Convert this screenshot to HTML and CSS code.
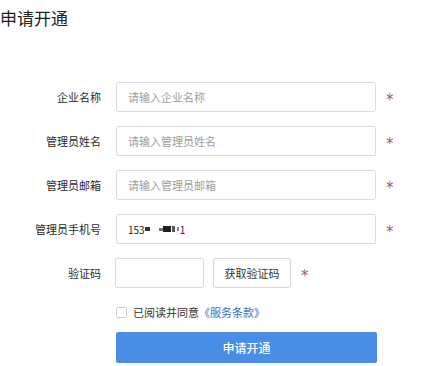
FILE: index.html
```html
<!DOCTYPE html>
<html lang="zh">
<head>
<meta charset="utf-8">
<link rel="stylesheet" href="styles.css">
</head>
<body>
<h1 class="title">申请开通</h1>
<form class="form">
  <div class="row">
    <label class="label">企业名称</label>
    <div class="input placeholder">请输入企业名称</div>
    <span class="star">*</span>
  </div>
  <div class="row">
    <label class="label">管理员姓名</label>
    <div class="input placeholder">请输入管理员姓名</div>
    <span class="star">*</span>
  </div>
  <div class="row">
    <label class="label">管理员邮箱</label>
    <div class="input placeholder">请输入管理员邮箱</div>
    <span class="star">*</span>
  </div>
  <div class="row">
    <label class="label">管理员手机号</label>
    <div class="input value">153<span class="blk b1"></span><span class="gap"></span><span class="blk b2"></span><span class="blk b3"></span><span class="blk b4"></span><span class="blk b5"></span>1</div>
    <span class="star">*</span>
  </div>
  <div class="row">
    <label class="label">验证码</label>
    <div class="input code"></div>
    <button type="button" class="getcode">获取验证码</button>
    <span class="star star-code">*</span>
  </div>
  <div class="agree">
    <span class="checkbox"></span>
    <span class="agree-text">已阅读并同意<span class="link">《服务条款》</span></span>
  </div>
  <button type="button" class="submit">申请开通</button>
</form>
</body>
</html>
```
FILE: styles.css
```css
html, body {
  margin: 0;
  padding: 0;
  background: #fff;
}
body {
  font-family: "Noto Sans CJK SC", "Noto Sans", sans-serif;
  color: #333;
  width: 421px;
  height: 366px;
  overflow: hidden;
}
.title {
  margin: 7px 0 0 0;
  font-size: 17px;
  line-height: 22px;
  font-weight: 400;
  color: #222;
}
.form {
  margin-top: 53px;
  display: flex;
  flex-direction: column;
}
.row {
  display: flex;
  align-items: center;
  height: 30px;
  margin-bottom: 14px;
}
.label {
  width: 101px;
  text-align: right;
  font-size: 11px;
  color: #2a2a2a;
  margin-right: 15px;
  flex: none;
}
.input {
  box-sizing: border-box;
  width: 260px;
  height: 30px;
  border: 1px solid #dcdcdc;
  border-radius: 2px;
  font-size: 11px;
  padding-left: 11px;
  display: flex;
  align-items: center;
  flex: none;
}
.placeholder {
  color: #9e9e9e;
}
.value {
  color: #222;
  font-size: 10px;
}
.blk {
  display: inline-block;
  background: #333;
  height: 5px;
}
.b1 { width: 5px; height: 4px; }
.gap { display: inline-block; width: 9px; }
.b2 { width: 4px; height: 3px; background: #777; }
.b3 { width: 8px; height: 6px; background: #222; }
.b4 { width: 3px; height: 6px; background: #555; margin-left: 1px; }
.b5 { width: 2px; height: 4px; background: #888; margin: 0 1px 0 2px; }
.star {
  margin-left: 10px;
  color: #a0606a;
  font-family: "DejaVu Sans", sans-serif;
  font-size: 15px;
  line-height: 15px;
  padding-top: 6px;
}
.code {
  width: 89px;
  margin-left: -1px;
}
.getcode {
  box-sizing: border-box;
  margin-left: 9px;
  width: 78px;
  height: 30px;
  border: 1px solid #d6d6d6;
  border-radius: 3px;
  background: #fff;
  font-family: inherit;
  font-size: 11px;
  color: #333;
  padding: 0;
}
.star-code {
  margin-left: 10px;
}
.agree {
  display: flex;
  align-items: center;
  margin-left: 116px;
  margin-top: 3px;
  height: 14px;
}
.checkbox {
  box-sizing: border-box;
  width: 11px;
  height: 11px;
  border: 1px solid #cfcfcf;
  border-radius: 2px;
  margin-right: 6px;
}
.agree-text {
  font-size: 11px;
  color: #333;
}
.link {
  color: #3b6fc4;
}
.submit {
  margin: 13px 0 0 116px;
  width: 261px;
  height: 31px;
  border: none;
  border-radius: 2px;
  background: #4a8de6;
  color: #fff;
  font-family: inherit;
  font-size: 12px;
  font-weight: 500;
  padding: 0;
}
```
